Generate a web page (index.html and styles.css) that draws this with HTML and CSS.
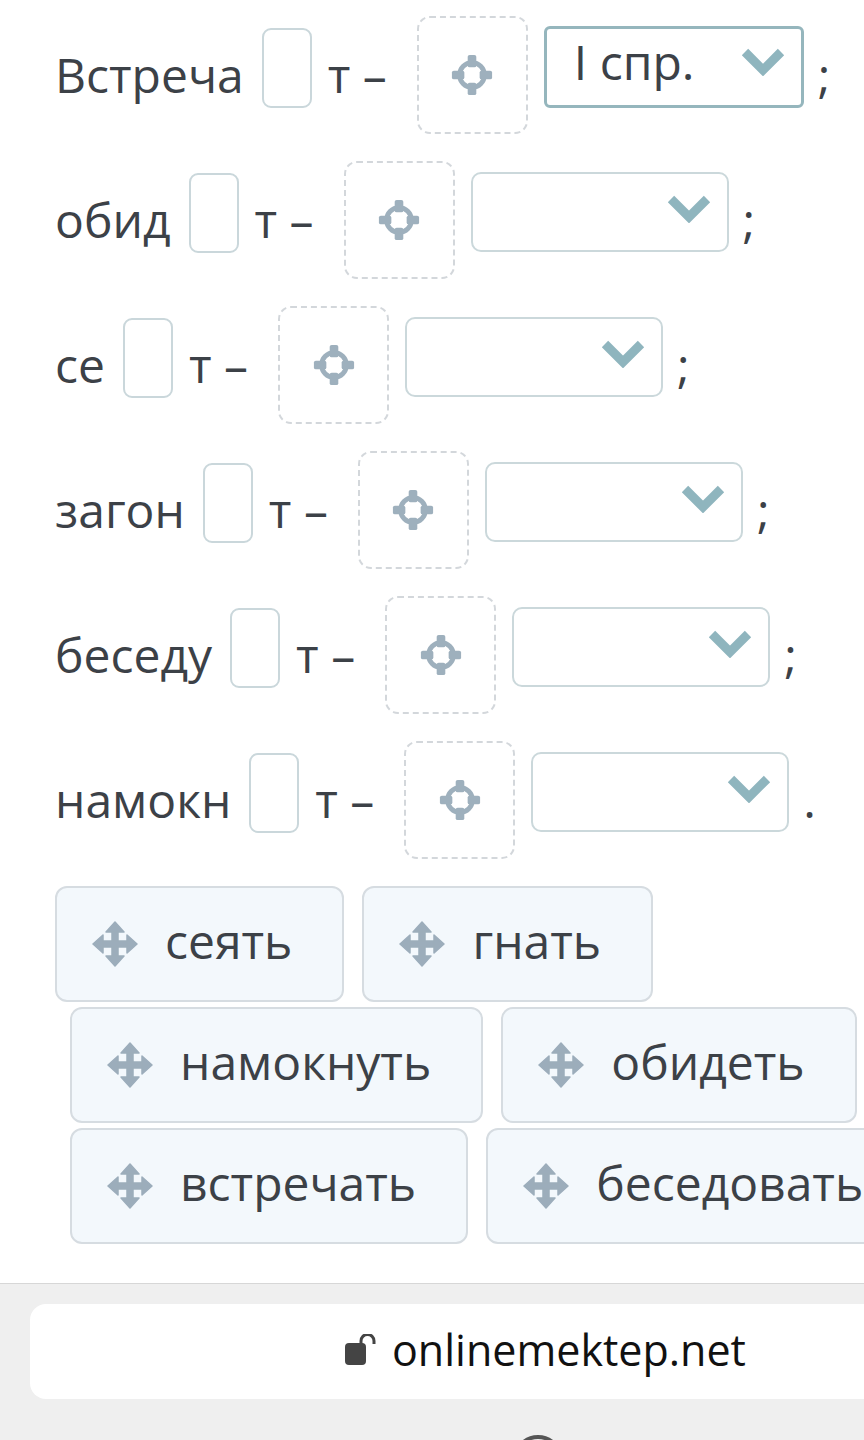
FILE: index.html
```html
<!DOCTYPE html>
<html lang="ru">
<head>
<meta charset="utf-8">
<title>Упражнение</title>
<link rel="stylesheet" href="styles.css">
</head>
<body>
<main class="exercise">
  <div class="row">
    <span class="word">Встреча</span>
    <span class="letter-box"></span>
    <span class="suffix">т –</span>
    <div class="drop"><svg class="target" viewBox="0 0 46 46"><circle cx="23" cy="23" r="13"/><rect x="18.5" y="2" width="9" height="13" rx="2"/><rect x="18.5" y="31" width="9" height="13" rx="2"/><rect x="2" y="18.5" width="13" height="9" rx="2"/><rect x="31" y="18.5" width="13" height="9" rx="2"/></svg></div>
    <div class="select filled"><span class="sel-text">I спр.</span><svg class="chev" viewBox="0 0 44 28"><polyline points="4,4 22,22 40,4"/></svg></div>
    <span class="punct">;</span>
  </div>
  <div class="row">
    <span class="word">обид</span>
    <span class="letter-box"></span>
    <span class="suffix">т –</span>
    <div class="drop"><svg class="target" viewBox="0 0 46 46"><circle cx="23" cy="23" r="13"/><rect x="18.5" y="2" width="9" height="13" rx="2"/><rect x="18.5" y="31" width="9" height="13" rx="2"/><rect x="2" y="18.5" width="13" height="9" rx="2"/><rect x="31" y="18.5" width="13" height="9" rx="2"/></svg></div>
    <div class="select"><span class="sel-text"></span><svg class="chev" viewBox="0 0 44 28"><polyline points="4,4 22,22 40,4"/></svg></div>
    <span class="punct">;</span>
  </div>
  <div class="row">
    <span class="word">се</span>
    <span class="letter-box"></span>
    <span class="suffix">т –</span>
    <div class="drop"><svg class="target" viewBox="0 0 46 46"><circle cx="23" cy="23" r="13"/><rect x="18.5" y="2" width="9" height="13" rx="2"/><rect x="18.5" y="31" width="9" height="13" rx="2"/><rect x="2" y="18.5" width="13" height="9" rx="2"/><rect x="31" y="18.5" width="13" height="9" rx="2"/></svg></div>
    <div class="select"><span class="sel-text"></span><svg class="chev" viewBox="0 0 44 28"><polyline points="4,4 22,22 40,4"/></svg></div>
    <span class="punct">;</span>
  </div>
  <div class="row">
    <span class="word">загон</span>
    <span class="letter-box"></span>
    <span class="suffix">т –</span>
    <div class="drop"><svg class="target" viewBox="0 0 46 46"><circle cx="23" cy="23" r="13"/><rect x="18.5" y="2" width="9" height="13" rx="2"/><rect x="18.5" y="31" width="9" height="13" rx="2"/><rect x="2" y="18.5" width="13" height="9" rx="2"/><rect x="31" y="18.5" width="13" height="9" rx="2"/></svg></div>
    <div class="select"><span class="sel-text"></span><svg class="chev" viewBox="0 0 44 28"><polyline points="4,4 22,22 40,4"/></svg></div>
    <span class="punct">;</span>
  </div>
  <div class="row">
    <span class="word">беседу</span>
    <span class="letter-box"></span>
    <span class="suffix">т –</span>
    <div class="drop"><svg class="target" viewBox="0 0 46 46"><circle cx="23" cy="23" r="13"/><rect x="18.5" y="2" width="9" height="13" rx="2"/><rect x="18.5" y="31" width="9" height="13" rx="2"/><rect x="2" y="18.5" width="13" height="9" rx="2"/><rect x="31" y="18.5" width="13" height="9" rx="2"/></svg></div>
    <div class="select"><span class="sel-text"></span><svg class="chev" viewBox="0 0 44 28"><polyline points="4,4 22,22 40,4"/></svg></div>
    <span class="punct">;</span>
  </div>
  <div class="row">
    <span class="word">намокн</span>
    <span class="letter-box"></span>
    <span class="suffix">т –</span>
    <div class="drop"><svg class="target" viewBox="0 0 46 46"><circle cx="23" cy="23" r="13"/><rect x="18.5" y="2" width="9" height="13" rx="2"/><rect x="18.5" y="31" width="9" height="13" rx="2"/><rect x="2" y="18.5" width="13" height="9" rx="2"/><rect x="31" y="18.5" width="13" height="9" rx="2"/></svg></div>
    <div class="select"><span class="sel-text"></span><svg class="chev" viewBox="0 0 44 28"><polyline points="4,4 22,22 40,4"/></svg></div>
    <span class="punct">.</span>
  </div>

  <div class="chips">
    <div class="chip-row">
      <div class="chip"><svg class="move" viewBox="0 0 46 46"><rect x="20" y="8" width="6" height="30" rx="1"/><rect x="8" y="20" width="30" height="6" rx="1"/><polygon points="23,1 32,11 14,11"/><polygon points="23,45 32,35 14,35"/><polygon points="1,23 11,14 11,32"/><polygon points="45,23 35,14 35,32"/></svg><span>сеять</span></div>
      <div class="chip"><svg class="move" viewBox="0 0 46 46"><rect x="20" y="8" width="6" height="30" rx="1"/><rect x="8" y="20" width="30" height="6" rx="1"/><polygon points="23,1 32,11 14,11"/><polygon points="23,45 32,35 14,35"/><polygon points="1,23 11,14 11,32"/><polygon points="45,23 35,14 35,32"/></svg><span>гнать</span></div>
    </div>
    <div class="chip-row indent">
      <div class="chip"><svg class="move" viewBox="0 0 46 46"><rect x="20" y="8" width="6" height="30" rx="1"/><rect x="8" y="20" width="30" height="6" rx="1"/><polygon points="23,1 32,11 14,11"/><polygon points="23,45 32,35 14,35"/><polygon points="1,23 11,14 11,32"/><polygon points="45,23 35,14 35,32"/></svg><span>намокнуть</span></div>
      <div class="chip"><svg class="move" viewBox="0 0 46 46"><rect x="20" y="8" width="6" height="30" rx="1"/><rect x="8" y="20" width="30" height="6" rx="1"/><polygon points="23,1 32,11 14,11"/><polygon points="23,45 32,35 14,35"/><polygon points="1,23 11,14 11,32"/><polygon points="45,23 35,14 35,32"/></svg><span>обидеть</span></div>
    </div>
    <div class="chip-row indent">
      <div class="chip"><svg class="move" viewBox="0 0 46 46"><rect x="20" y="8" width="6" height="30" rx="1"/><rect x="8" y="20" width="30" height="6" rx="1"/><polygon points="23,1 32,11 14,11"/><polygon points="23,45 32,35 14,35"/><polygon points="1,23 11,14 11,32"/><polygon points="45,23 35,14 35,32"/></svg><span>встречать</span></div>
      <div class="chip"><svg class="move" viewBox="0 0 46 46"><rect x="20" y="8" width="6" height="30" rx="1"/><rect x="8" y="20" width="30" height="6" rx="1"/><polygon points="23,1 32,11 14,11"/><polygon points="23,45 32,35 14,35"/><polygon points="1,23 11,14 11,32"/><polygon points="45,23 35,14 35,32"/></svg><span>беседовать</span></div>
    </div>
  </div>
</main>

<footer class="browser-bar">
  <div class="url-bar">
    <svg class="lock" viewBox="0 0 34 32"><path class="shackle" d="M17 11 V7 a6.5 6.5 0 0 1 13 0 V10"/><rect x="1" y="9" width="21" height="22" rx="4"/></svg>
    <span class="url">onlinemektep.net</span>
  </div>
  <div class="nav-area"><span class="home-ring"></span></div>
</footer>
</body>
</html>
```

FILE: styles.css
```css
html, body {
  margin: 0;
  padding: 0;
}

body {
  width: 864px;
  height: 1440px;
  overflow: hidden;
  background: #ffffff;
  font-family: "Open Sans", "Noto Sans", "DejaVu Sans", sans-serif;
  color: #3c4147;
}

.exercise {
  padding: 16px 0 0 55px;
}

.row {
  display: flex;
  align-items: center;
  height: 118px;
  margin-bottom: 27px;
  font-size: 48px;
  line-height: 1;
  white-space: nowrap;
}

.word {
  margin-right: 18px;
}

.letter-box {
  box-sizing: border-box;
  width: 50px;
  height: 80px;
  border: 2px solid #cad7db;
  border-radius: 9px;
  margin-right: 16px;
  margin-bottom: 15px;
}

.suffix {
  margin-right: 30px;
}

.drop {
  box-sizing: border-box;
  width: 111px;
  height: 118px;
  border: 2px dashed #d3d7db;
  border-radius: 13px;
  display: flex;
  align-items: center;
  justify-content: center;
  margin-right: 16px;
}

.target {
  width: 44px;
  height: 44px;
}

.target circle {
  fill: none;
  stroke: #9eb0bd;
  stroke-width: 5;
}

.target rect {
  fill: #9eb0bd;
}

.select {
  box-sizing: border-box;
  width: 258px;
  height: 80px;
  border: 2px solid #cbd8db;
  border-radius: 10px;
  display: flex;
  align-items: center;
  justify-content: space-between;
  padding: 0 16px 6px 29px;
  margin-right: 14px;
  margin-bottom: 16px;
}

.select.filled {
  width: 260px;
  height: 82px;
  border: 3px solid #95b6bd;
  border-radius: 6px;
  padding-left: 27px;
  padding-bottom: 10px;
}

.sel-text {
  color: #3c4147;
}

.chev {
  width: 44px;
  height: 28px;
  flex: none;
}

.chev polyline {
  fill: none;
  stroke: #8fb5be;
  stroke-width: 9;
  stroke-linecap: butt;
  stroke-linejoin: miter;
}

.punct {
  color: #3c4147;
}

.chips {
  display: flex;
  flex-direction: column;
  gap: 5px;
}

.chip-row {
  display: flex;
  gap: 18px;
  flex-wrap: nowrap;
}

.chip-row.indent {
  margin-left: 15px;
}

.chip {
  box-sizing: border-box;
  flex: none;
  height: 116px;
  display: flex;
  align-items: center;
  gap: 27px;
  padding: 0 50px 0 35px;
  background: #f3f8fc;
  border: 2px solid #d6dce1;
  border-radius: 12px;
  font-size: 48px;
  line-height: 1;
  white-space: nowrap;
  color: #3c4147;
}

.chip span {
  padding-bottom: 6px;
}

.move {
  width: 46px;
  height: 46px;
  flex: none;
}

.move rect,
.move polygon {
  fill: #9cadbb;
  stroke: #9cadbb;
  stroke-width: 1.5;
  stroke-linejoin: round;
}

.browser-bar {
  margin-top: 39px;
  border-top: 1px solid #d7d7d7;
  background: #efefef;
  padding-top: 20px;
  height: 200px;
}

.url-bar {
  margin-left: 30px;
  height: 95px;
  background: #ffffff;
  border-radius: 16px 0 0 16px;
  display: flex;
  align-items: center;
  gap: 14px;
  padding-left: 314px;
  box-sizing: border-box;
  width: 834px;
}

.lock {
  width: 34px;
  height: 32px;
  margin-top: -4px;
}

.lock rect {
  fill: #444444;
}

.lock .shackle {
  fill: none;
  stroke: #444444;
  stroke-width: 3;
}

.url {
  font-size: 43px;
  color: #111111;
  line-height: 1;
  padding-bottom: 4px;
}

.nav-area {
  padding-left: 513px;
  padding-top: 36px;
}

.home-ring {
  display: block;
  width: 50px;
  height: 50px;
  border-radius: 50%;
  border: 4px solid #555555;
  box-sizing: border-box;
}
```
